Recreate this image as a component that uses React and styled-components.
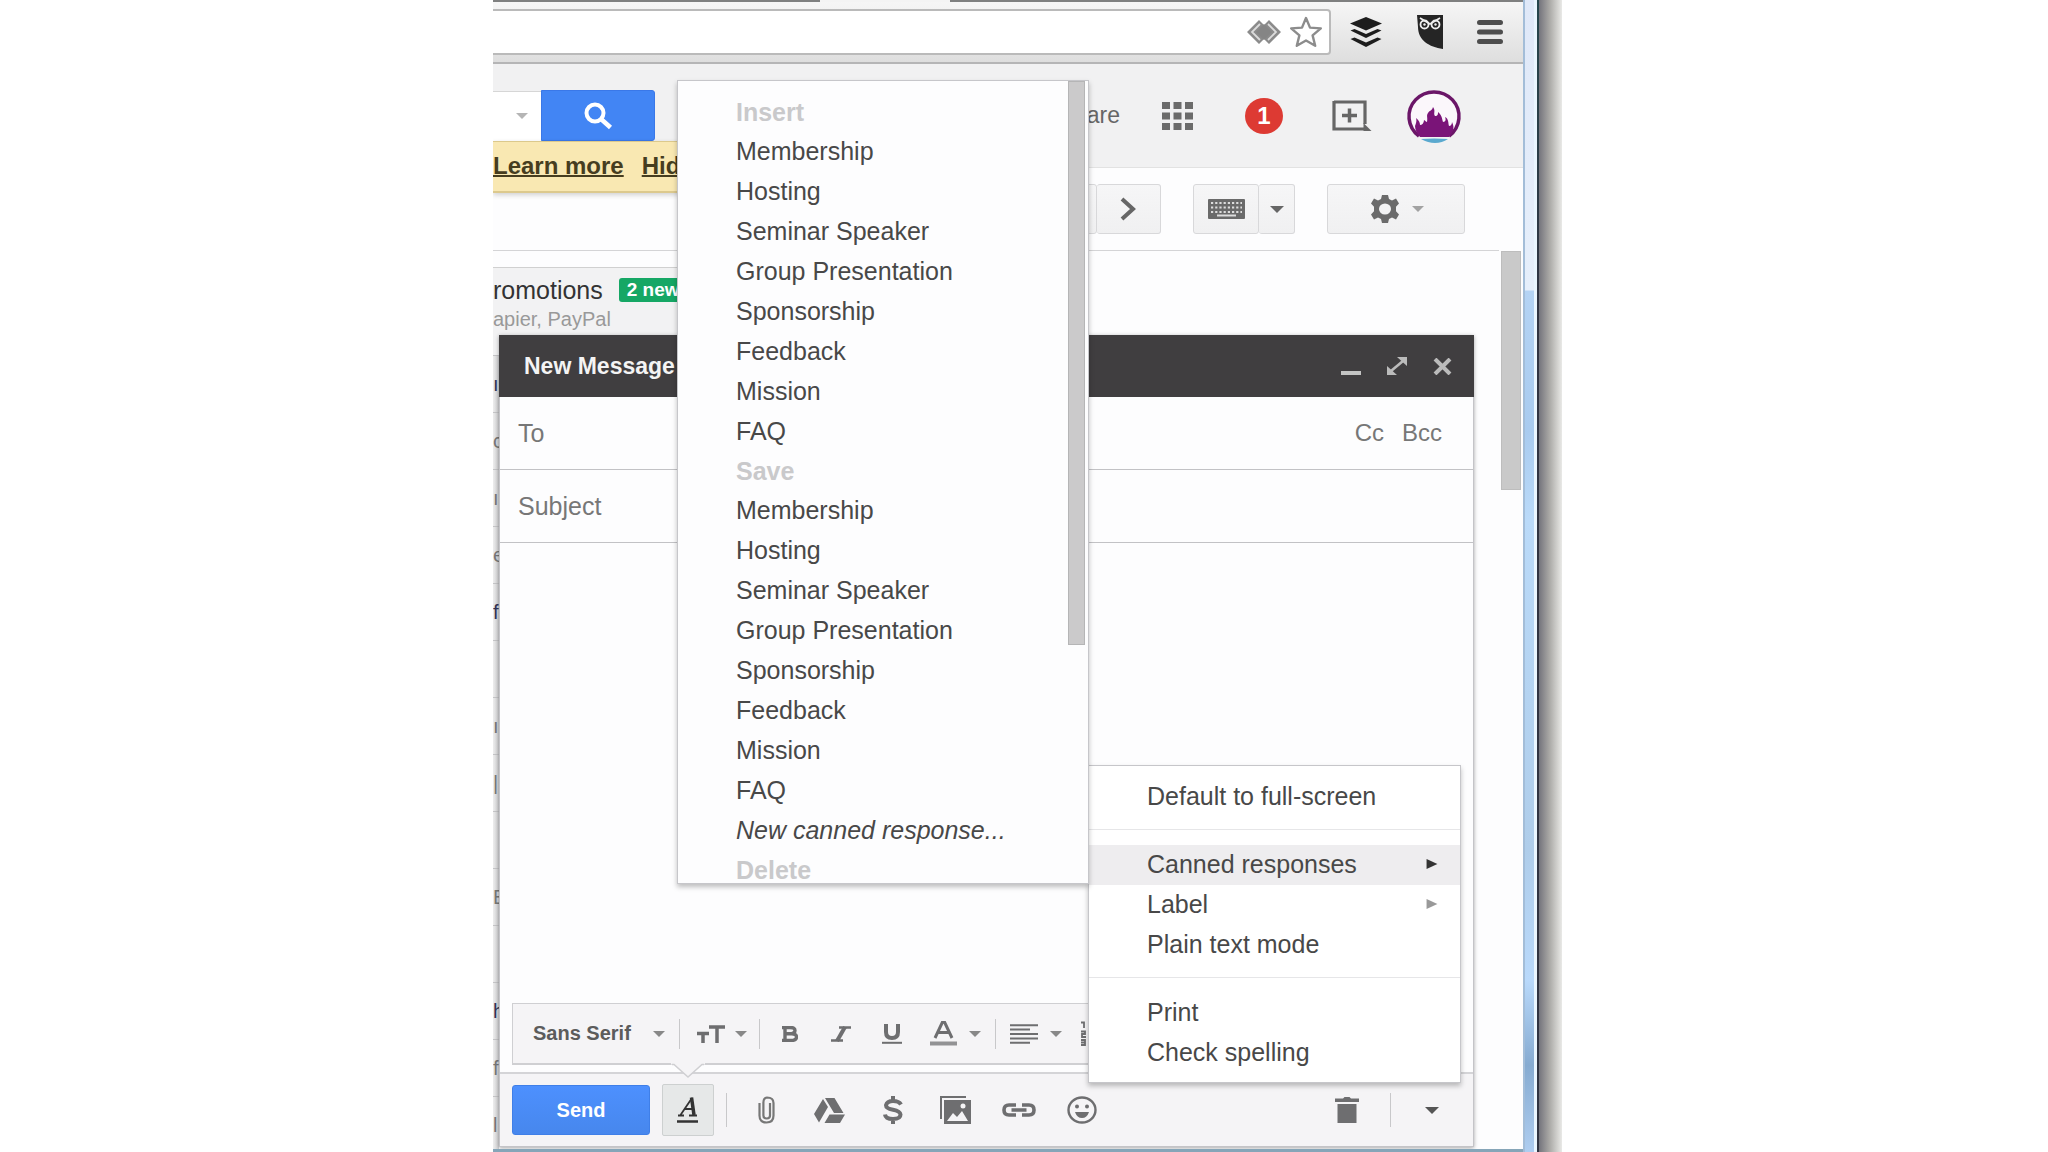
import React from "react";
import styled, { createGlobalStyle, css } from "styled-components";

const Global = createGlobalStyle`
  * { box-sizing: border-box; }
  body { margin: 0; background: #fff; font-family: "Liberation Sans", Arial, sans-serif; color: #444; }
  button, input, textarea { font: inherit; color: inherit; margin: 0; padding: 0; border: 0; background: none; outline: 0; }
  button { cursor: pointer; }
  ul { list-style: none; margin: 0; padding: 0; }
  svg { display: block; flex: none; }
`;

const Page = styled.div`
  display: grid;
  grid-template-columns: minmax(0, 493fr) minmax(0, 1069fr) minmax(0, 486fr);
  height: 100vh;
  overflow: hidden;
`;
const Stage = styled.div`
  grid-column: 2;
  display: flex;
  min-height: 0;
`;
const Screen = styled.div`
  position: relative;
  flex: 1;
  min-width: 0;
  display: flex;
  flex-direction: column;
  overflow: hidden;
  background: #fdfdfe;
  border-bottom: 3px solid #86a5b8;
`;
const Frame = styled.div`
  width: 14px;
  border-left: 2px solid #a3bdd8;
  border-right: 3px solid #eaf6ff;
  background: linear-gradient(#dfe8f8 0, #e6effb 290px, #b4d3f4 291px, #a9cbef 430px, #badaf9 520px, #afcdea 850px, #b9d9fb 980px, #86abd1 1065px, #aecdf0 1152px);
`;
const Edge = styled.div`
  width: 2px;
  background: linear-gradient(#25454c, #303442 300px);
`;
const Shade = styled.div`
  width: 23px;
  background: linear-gradient(90deg, #74747c, #a9a8a5 45%, #dededb 90%, #e9e9e7);
`;

/* browser chrome */
const TabStrip = styled.div`
  display: flex;
  height: 2px;
  background: #7f8080;
`;
const ActiveTab = styled.div`
  width: 130px;
  margin-left: 327px;
  background: #f4f4f4;
`;
const ChromeBar = styled.div`
  display: flex;
  align-items: center;
  height: 62px;
  padding-right: 20px;
  border-bottom: 2px solid #b5b5b6;
  background: linear-gradient(#f6f6f6, #dedede);
`;
const Address = styled.div`
  flex: 1;
  display: flex;
  align-items: center;
  gap: 7px;
  height: 46px;
  padding-right: 6px;
  border: 2px solid #bababa;
  border-left: 0;
  border-radius: 0 4px 4px 0;
  background: #fff;
`;
const AddressInput = styled.input`
  flex: 1;
  min-width: 0;
  font-size: 24px;
`;
const Extensions = styled.div`
  display: flex;
  align-items: center;
  gap: 34px;
  padding-left: 18px;
`;
const IconButton = styled.button`
  display: flex;
  align-items: center;
  justify-content: center;
`;

/* mail header */
const Header = styled.header`
  display: flex;
  align-items: center;
  height: 104px;
  padding-right: 61px;
  border-bottom: 1px solid #e2e2e2;
  background: #f1f1f2;
`;
const SearchOptions = styled.button`
  display: flex;
  align-items: center;
  justify-content: flex-end;
  width: 48px;
  height: 50px;
  padding-right: 13px;
  border-top: 1px solid #d6d6d6;
  background: #fff;
`;
const SearchButton = styled.button`
  display: flex;
  align-items: center;
  justify-content: center;
  width: 114px;
  height: 51px;
  border: 1px solid #3a78e8;
  border-radius: 0 3px 3px 0;
  background: #4285f4;
`;
const HeaderTools = styled.div`
  display: flex;
  align-items: center;
  margin-left: auto;
`;
const ShareLabel = styled.span`
  margin-right: 42px;
  font-size: 23px;
  color: #666;
`;
const Count = styled.button`
  width: 38px;
  height: 36px;
  margin: 0 49px 0 52px;
  border-radius: 50%;
  background: #dd3a33;
  color: #fff;
  font-size: 24px;
  font-weight: bold;
  line-height: 36px;
`;
const Avatar = styled(IconButton)`
  margin-left: 34px;
`;
const Notice = styled.div`
  position: absolute;
  top: 141px;
  left: 0;
  display: flex;
  gap: 18px;
  width: 260px;
  height: 52px;
  border-top: 1px solid #dcc98c;
  border-bottom: 2px solid #dcc98e;
  background: #f9e8b2;
  box-shadow: 0 2px 5px rgba(0, 0, 0, 0.18);
  font-size: 24px;
  font-weight: bold;
  line-height: 48px;
`;
const NoticeLink = styled.a`
  color: #463d1f;
  text-decoration: underline;
  text-decoration-thickness: 2px;
`;

/* action bar */
const Actions = styled.div`
  display: flex;
  justify-content: flex-end;
  gap: 32px;
  height: 83px;
  margin-right: 24px;
  padding: 16px 34px 0 0;
  border-bottom: 1px solid #d4d4d6;
`;
const ButtonGroup = styled.div`
  display: flex;
  height: 50px;
`;
const BarButton = styled.button`
  display: flex;
  align-items: center;
  justify-content: center;
  gap: 11px;
  width: ${(p) => p.$w}px;
  border: 1px solid #d8d8da;
  border-radius: 3px;
  background: linear-gradient(#f6f6f7, #f0f0f1);
  & + & { border-left: 0; }
`;

/* inbox behind the compose window */
const Mailbox = styled.div`
  flex: 1;
  display: flex;
  min-height: 0;
`;
const MailColumn = styled.div`
  flex: 1;
  min-width: 0;
  padding-top: 16px;
`;
const CategoryTab = styled.div`
  width: 300px;
  height: 88px;
  padding-top: 8px;
  border-top: 1px solid #d0d0d0;
  background: #f2f2f3;
`;
const CategoryTitle = styled.div`
  display: flex;
  align-items: center;
  gap: 16px;
  height: 28px;
  color: #333;
  font-size: 25px;
`;
const NewBadge = styled.span`
  height: 24px;
  padding: 0 8px;
  border-radius: 3px;
  background: #16a765;
  color: #fff;
  font-size: 19px;
  font-weight: bold;
  line-height: 23px;
`;
const CategoryNote = styled.div`
  color: #999;
  font-size: 20px;
  line-height: 30px;
`;
const MailRow = styled.div`
  width: 6px;
  height: 57px;
  overflow: hidden;
  border-top: 1px solid #c4c4c6;
  background: linear-gradient(90deg, #ededed, #cfcfd1);
  color: ${(p) => (p.$unread ? "#335" : "#777")};
  font-size: 20px;
  line-height: 56px;
`;
const ScrollThumb = styled.div`
  width: 20px;
  height: 239px;
  margin-right: 2px;
  border: 1px solid #bdbdbd;
  background: #c9c9c9;
`;

/* compose window */
const Compose = styled.section`
  position: absolute;
  top: 335px;
  right: 49px;
  bottom: 2px;
  left: 6px;
  display: flex;
  flex-direction: column;
  border: 1px solid #c4c4c8;
  border-top: 0;
  background: #fdfdfe;
  box-shadow: 0 1px 4px rgba(0, 0, 0, 0.35);
`;
const ComposeHeader = styled.header`
  display: flex;
  align-items: center;
  gap: 26px;
  height: 62px;
  margin: 0 -1px;
  padding: 0 22px 0 25px;
  background: #403e40;
`;
const ComposeTitle = styled.h1`
  flex: 1;
  margin: 0;
  color: #f4f4f4;
  font-size: 23px;
  font-weight: bold;
`;
const Field = styled.label`
  display: flex;
  align-items: center;
  gap: 18px;
  height: 73px;
  padding: 0 31px 0 18px;
  border-bottom: 1px solid #c2c2c5;
  color: #777;
  font-size: 24px;
`;
const FieldInput = styled.input`
  flex: 1;
  min-width: 0;
  font-size: 25px;
  &::placeholder { color: #777; opacity: 1; }
`;
const MessageBody = styled.textarea`
  flex: 1;
  width: 100%;
  resize: none;
`;
const FormatBar = styled.div`
  position: relative;
  display: flex;
  align-items: center;
  height: 62px;
  margin: 0 12px 7px;
  border: 1px solid #cfcfd2;
  border-bottom-width: 2px;
  background: #f5f4f6;
`;
const Pointer = styled.svg`
  position: absolute;
  top: 57px;
  left: 158px;
`;
const FormatCell = styled.button`
  display: flex;
  align-items: center;
  justify-content: ${(p) => (p.$spread ? "space-between" : "center")};
  flex: none;
  width: ${(p) => p.$w}px;
  height: 44px;
  padding: ${(p) => p.$pad || "0"};
  color: #5c5c5c;
  font-size: 20px;
  font-weight: bold;
`;
const Divider = styled.span`
  flex: none;
  width: 1px;
  height: ${(p) => p.$h || 30}px;
  background: #c8c8ca;
`;
const Spacer = styled.span`
  width: 4px;
`;
const SendBar = styled.footer`
  display: flex;
  align-items: center;
  height: 74px;
  padding: 0 34px 0 12px;
  border-top: 2px solid #d4d4d7;
  background: #f5f4f6;
`;
const SendButton = styled.button`
  width: 138px;
  height: 50px;
  border: 1px solid #3f7fe8;
  border-radius: 3px;
  background: linear-gradient(#4d90fe, #4787ed);
  color: #fff;
  font-size: 20px;
  font-weight: bold;
`;
const StyleToggle = styled.button`
  width: 52px;
  height: 52px;
  margin: 0 12px;
  border: 1px solid #cdd0d0;
  border-radius: 2px;
  background: #e6e8e8;
  display: flex;
  align-items: center;
  justify-content: center;
`;
const Tools = styled.div`
  display: flex;
  flex: 1;
  padding-left: 8px;
`;
const ToolButton = styled(IconButton)`
  width: 63px;
  height: 50px;
`;
const Trash = styled(IconButton)`
  margin-right: 31px;
`;
const More = styled(IconButton)`
  margin-left: 34px;
`;

/* menus */
const panel = css`
  position: absolute;
  border: 1px solid #c6c6ca;
  background: #fff;
  box-shadow: 0 3px 5px rgba(0, 0, 0, 0.25);
`;
const OptionsMenu = styled.div`
  ${panel}
  right: 12px;
  bottom: 63px;
  width: 373px;
  padding: 11px 0 9px;
`;
const CannedMenu = styled.div`
  ${panel}
  right: 371px;
  bottom: 198px;
  display: flex;
  justify-content: space-between;
  width: 412px;
  height: 804px;
  padding-right: 3px;
  background: #fdfdfe;
`;
const CannedList = styled.ul`
  flex: 1;
  height: 802px;
  padding-top: 12px;
  overflow: hidden;
`;
const CannedThumb = styled.div`
  width: 17px;
  height: 564px;
  border: 1px solid #b5b5b6;
  background: #cbcacb;
`;
const MenuItem = styled.button`
  display: flex;
  align-items: center;
  justify-content: space-between;
  width: 100%;
  height: 40px;
  padding: 0 22px 2px 58px;
  background: ${(p) => (p.$active ? "#eeedef" : "transparent")};
  color: #484848;
  font-size: 25px;
  font-style: ${(p) => (p.$italic ? "italic" : "normal")};
  text-align: left;
  white-space: nowrap;
`;
const MenuHeading = styled.li`
  height: 39px;
  padding-left: 58px;
  color: #c9c9cb;
  font-size: 25px;
  font-weight: bold;
  line-height: 38px;
`;
const MenuRule = styled.div`
  height: 1px;
  margin: 12px 0 15px;
  background: #e6e6e8;
`;

const Caret = ({ color = "#777", w = 12 }) => (
  <svg width={w} height={w / 2} viewBox="0 0 12 6"><path d="M0 0h12L6 6z" fill={color} /></svg>
);
const Arrow = ({ color }) => (
  <svg width="12" height="10" viewBox="0 0 13 12"><path d="M0 0l13 6-13 6z" fill={color} /></svg>
);

const RESPONSES = ["Membership", "Hosting", "Seminar Speaker", "Group Presentation", "Sponsorship", "Feedback", "Mission", "FAQ"];
const ROWS = [["ı", 1], ["c"], ["ı"], ["e"], ["f", 1], [""], ["ı"], ["|"], [""], ["E"], [""], ["h", 1], ["f"], ["l"]];
const G = "#6e6e70";

function Chrome() {
  return (
    <>
      <TabStrip><ActiveTab /></TabStrip>
      <ChromeBar>
        <Address>
          <AddressInput aria-label="Address" />
          <IconButton aria-label="Page action">
            <svg width="36" height="26" viewBox="0 0 36 26">
              <path d="M13 1L1 13l12 12 5-5 5 5 12-12L23 1l-5 5z" fill="#8b8b8b" />
              <path d="M14 5l-8 8 8 8M22 5l8 8-8 8" fill="none" stroke="#dcdcdc" strokeWidth="1.800" />
              <path d="M18 5l8 8-8 8-8-8z" fill="#858585" />
            </svg>
          </IconButton>
          <IconButton aria-label="Bookmark">
            <svg width="34" height="32" viewBox="0 0 34 32">
              <path d="M17 2l4 9.600 10.800.8-8.200 7 2.600 10.400L17 24.500l-9.200 5.300 2.600-10.400-8.200-7 10.800-.8z" fill="#fff" stroke="#8c8c8c" strokeWidth="2.400" strokeLinejoin="round" />
            </svg>
          </IconButton>
        </Address>
        <Extensions>
          <IconButton aria-label="Buffer">
            <svg width="34" height="30" viewBox="0 0 34 30">
              <path d="M17 0l16 6.500-16 7-16-7z" fill="#1d1d1d" />
              <path d="M1.500 13.500l4-1.500L17 17l11.500-5 4 1.500L17 21zM1.500 22l4-1.500L17 25.500l11.500-5 4 1.500L17 30z" fill="#1d1d1d" />
            </svg>
          </IconButton>
          <IconButton aria-label="Hootsuite">
            <svg width="26" height="34" viewBox="0 0 26 34">
              <path d="M0 0h26v34C12 32 1 25 1 12z" fill="#252525" />
              <g fill="none" stroke="#eee" strokeWidth="1.800"><circle cx="7.500" cy="9.500" r="4" /><circle cx="18.500" cy="9.500" r="4" /><path d="M3 3l10 6 10-6" /></g>
              <circle cx="7.500" cy="9.500" r="1.200" fill="#eee" /><circle cx="18.500" cy="9.500" r="1.200" fill="#eee" />
            </svg>
          </IconButton>
          <IconButton aria-label="Browser menu">
            <svg width="26" height="24" viewBox="0 0 26 24"><path d="M2.500 2.500h21M2.500 12h21M2.500 21.500h21" stroke="#4d4d4d" strokeWidth="5" strokeLinecap="round" /></svg>
          </IconButton>
        </Extensions>
      </ChromeBar>
    </>
  );
}

function MailHeader() {
  return (
    <Header>
      <SearchOptions aria-label="Search options"><Caret color="#b5b5b5" /></SearchOptions>
      <SearchButton aria-label="Search">
        <svg width="30" height="28" viewBox="0 0 30 28">
          <circle cx="12" cy="11" r="8.500" fill="none" stroke="#fff" strokeWidth="4" />
          <path d="M18 17l9.500 8.500" stroke="#fff" strokeWidth="4.500" />
        </svg>
      </SearchButton>
      <HeaderTools>
        <ShareLabel>are</ShareLabel>
        <IconButton aria-label="Apps">
          <svg width="31" height="28" viewBox="0 0 31 28" fill="#6b6b6b">
            {[0, 10.5, 21].map((y) => [0, 11.5, 23].map((x) => <rect key={`${x}-${y}`} x={x} y={y} width="8" height="7" />))}
          </svg>
        </IconButton>
        <Count>1</Count>
        <IconButton aria-label="Add">
          <svg width="40" height="32" viewBox="0 0 40 32">
            <path d="M2 2h31v22M2 1v28h31" fill="none" stroke="#666" strokeWidth="3.200" />
            <path d="M31.500 23l8 8h-8z" fill="#666" />
            <path d="M17.500 8.500v14M10 15.500h15" stroke="#666" strokeWidth="3.500" />
          </svg>
        </IconButton>
        <Avatar aria-label="Account">
          <svg width="56" height="54" viewBox="0 0 56 54">
            <path d="M13 47A25 24.500 0 1 1 43 47" fill="#fbf7fb" stroke="#6b1668" strokeWidth="3.500" />
            <path d="M9 37c1-3 2-5 1-8 3 2 4 5 4 7 2 0 4-2 4-5 2 1 2 2 3 2 1-5-1-6 1-9 2-3 4-2 5-6 3 4 0 6 2 9 3 0 3-2 3-4 4 3 4 7 5 10 3 0 3-3 2-5 4 2 3 6 4 9 2 0 3-2 3-4 3 6 1 10-3 15H14c-3-4-5-7-5-11z" fill="#7a1478" />
            <path d="M15 50q13-1 27 0-6 4-13 4t-14-4z" fill="#5aa9cf" />
          </svg>
        </Avatar>
      </HeaderTools>
    </Header>
  );
}

function ActionBar() {
  return (
    <Actions>
      <ButtonGroup>
        <BarButton $w={68} aria-label="Newer" />
        <BarButton $w={64} aria-label="Older">
          <svg width="17" height="24" viewBox="0 0 17 24"><path d="M2 2l11 10L2 22" fill="none" stroke="#666" strokeWidth="4" /></svg>
        </BarButton>
      </ButtonGroup>
      <ButtonGroup>
        <BarButton $w={66} aria-label="Input tools">
          <svg width="37" height="20" viewBox="0 0 37 20">
            <rect width="37" height="20" rx="1" fill="#6a6a6a" />
            <path d="M3 4h31M3 8.500h31M3 13h31" stroke="#ddd" strokeWidth="2" strokeDasharray="2.200 2" />
            <path d="M9 16.500h19" stroke="#ddd" strokeWidth="2" />
          </svg>
        </BarButton>
        <BarButton $w={36} aria-label="Choose input tool"><Caret color="#666" w={14} /></BarButton>
      </ButtonGroup>
      <ButtonGroup>
        <BarButton $w={138} aria-label="Settings">
          <svg width="32" height="30" viewBox="0 0 32 30">
            <path d="M13 1h6l1 4 3 1.500 4-2 3 5-3 3.200v4.600l3 3.200-3 5-4-2-3 1.500-1 4h-6l-1-4-3-1.500-4 2-3-5 3-3.200v-4.600l-3-3.200 3-5 4 2L12 5z" fill="#6b6b6b" />
            <ellipse cx="16" cy="15" rx="6" ry="5.500" fill="#f3f3f4" />
          </svg>
          <Caret color="#a2a2a2" />
        </BarButton>
      </ButtonGroup>
    </Actions>
  );
}

function FormatTools() {
  return (
    <FormatBar>
      <FormatCell $w={166} $spread $pad="0 14px 0 20px">Sans Serif<Caret color="#888" /></FormatCell>
      <Divider />
      <FormatCell $w={79} $spread $pad="0 12px 0 17px" aria-label="Size">
        <svg width="28" height="18" viewBox="0 0 28 18"><path d="M12 2h16M20 2v16M0 8.500h12M6 8.500V18" stroke={G} strokeWidth="3.500" /></svg>
        <Caret color="#888" />
      </FormatCell>
      <Divider />
      <Spacer />
      <FormatCell $w={51} aria-label="Bold">
        <svg width="17" height="16" viewBox="0 0 17 16"><path d="M1 1.500h8q5 0 5 3T9 7.800H4M4 1v13.500M1 14.500h9q5.500 0 5.500-3.500T10 7.800" fill="none" stroke={G} strokeWidth="3.400" /></svg>
      </FormatCell>
      <FormatCell $w={51} aria-label="Italic">
        <svg width="20" height="16" viewBox="0 0 20 16"><path d="M8 1.500h12M0 14.500h12" stroke={G} strokeWidth="2.500" /><path d="M14 1L6 15" stroke={G} strokeWidth="4" /></svg>
      </FormatCell>
      <FormatCell $w={51} aria-label="Underline">
        <svg width="20" height="20" viewBox="0 0 20 20"><path d="M4 0v8q0 6 6 6t6-6V0" fill="none" stroke={G} strokeWidth="4" /><path d="M0 18.800h20" stroke={G} strokeWidth="2" /></svg>
      </FormatCell>
      <FormatCell $w={78} $spread $pad="0 14px 0 13px" aria-label="Text color">
        <svg width="27" height="25" viewBox="0 0 27 25"><path d="M5 17L12.500 1h2L22 17M8 11.500h11" fill="none" stroke={G} strokeWidth="3" /><path d="M0 22.500h27" stroke="#929294" strokeWidth="4" /></svg>
        <Caret color="#888" />
      </FormatCell>
      <Divider />
      <FormatCell $w={72} $spread $pad="0 6px 0 14px" aria-label="Align">
        <svg width="28" height="20" viewBox="0 0 28 20"><path d="M0 1.200h28M0 5.600h20M0 10h28M0 14.400h28M0 18.800h20" stroke={G} strokeWidth="2" /></svg>
        <Caret color="#888" />
      </FormatCell>
      <FormatCell $w={46} aria-label="Numbered list">
        <svg width="20" height="26" viewBox="0 0 20 26"><path d="M0 1.500h3V7M0 10.500h4v2.500H1v3h4M0 19h4v5H0M0 21.500h4" fill="none" stroke={G} strokeWidth="1.800" /><path d="M9 4h11M9 13h11M9 22h11" stroke={G} strokeWidth="2" /></svg>
      </FormatCell>
      <Pointer width="34" height="18" viewBox="0 0 34 18"><path d="M0 3.500h3L17 16 31 3.500h3V0H0z" fill="#f5f4f6" /><path d="M1 3.500h2L17 16 31 3.500h2" fill="none" stroke="#cfcfd2" strokeWidth="1.500" /></Pointer>
    </FormatBar>
  );
}

function SendTools() {
  return (
    <SendBar>
      <SendButton>Send</SendButton>
      <StyleToggle aria-label="Formatting options">
        <svg width="22" height="28" viewBox="0 0 22 28"><path d="M1 19.500h6M12 19.500h8M3.500 19L15 2M8 13h8" stroke="#333" strokeWidth="1.800" fill="none" /><path d="M14.500 1.500L17 19" stroke="#333" strokeWidth="3.500" /><path d="M0 25.500h21" stroke="#333" strokeWidth="2.500" /></svg>
      </StyleToggle>
      <Divider $h={34} />
      <Tools>
        <ToolButton aria-label="Attach files">
          <svg width="17" height="28" viewBox="0 0 17 28"><path d="M12 7v12.500q0 3-3.300 3t-3.300-3V6.500Q5.400 2 9 1.500 15.500 1.500 15.500 7v12.500q0 7-7 7t-7-7V7" fill="none" stroke="#777" strokeWidth="2.200" /></svg>
        </ToolButton>
        <ToolButton aria-label="Insert from Drive">
          <svg width="31" height="25" viewBox="0 0 31 25" fill={G}><path d="M9 1l5 8-9 15.500L0 16zM11 0h9.500l9 15H20zM15.500 16.500H31L26 25H10.500z" /></svg>
        </ToolButton>
        <ToolButton aria-label="Send money">
          <svg width="20" height="28" viewBox="0 0 20 28"><path d="M18 8.500Q16 5 10 5T3 9.200Q3 12.500 10 13.800t7.500 4.700Q17.500 23 10 23T2 18.500M10 0v5M10 23v5" fill="none" stroke={G} strokeWidth="4" /></svg>
        </ToolButton>
        <ToolButton aria-label="Insert photo">
          <svg width="31" height="28" viewBox="0 0 31 28"><path d="M1 23V1h25" fill="none" stroke={G} strokeWidth="2" /><path d="M4 4h27v24H4z" fill={G} /><path d="M7 25l6-8 4 4 5-6 6 10z" fill="#f5f4f6" /><circle cx="23" cy="10" r="2.500" fill="#f5f4f6" /></svg>
        </ToolButton>
        <ToolButton aria-label="Insert link">
          <svg width="34" height="14" viewBox="0 0 34 14"><path d="M14 2H7Q2 2 2 7t5 5h7M20 2h7q5 0 5 5t-5 5h-7M9.500 7h15" fill="none" stroke={G} strokeWidth="3.600" /></svg>
        </ToolButton>
        <ToolButton aria-label="Insert emoji">
          <svg width="30" height="28" viewBox="0 0 30 28"><ellipse cx="15" cy="14" rx="13.500" ry="12.500" fill="none" stroke={G} strokeWidth="2.400" /><circle cx="10" cy="10.500" r="2" fill={G} /><circle cx="20" cy="10.500" r="2" fill={G} /><path d="M8 16h14q-2 6-7 6t-7-6z" fill={G} /></svg>
        </ToolButton>
      </Tools>
      <Trash aria-label="Discard draft">
        <svg width="24" height="26" viewBox="0 0 24 26" fill={G}><path d="M0 1.500h8L9.500 0h5L16 1.500h8V5H0zM2.500 7h19v19h-19z" /></svg>
      </Trash>
      <Divider $h={34} />
      <More aria-label="More options"><Caret color="#555" w={14} /></More>
    </SendBar>
  );
}

function Menus() {
  const items = (group) => RESPONSES.map((r) => <li key={group + r}><MenuItem>{r}</MenuItem></li>);
  return (
    <OptionsMenu>
      <MenuItem>Default to full-screen</MenuItem>
      <MenuRule />
      <MenuItem $active>Canned responses<Arrow color="#333" /></MenuItem>
      <MenuItem>Label<Arrow color="#999" /></MenuItem>
      <MenuItem>Plain text mode</MenuItem>
      <MenuRule />
      <MenuItem>Print</MenuItem>
      <MenuItem>Check spelling</MenuItem>
      <CannedMenu>
        <CannedList>
          <MenuHeading>Insert</MenuHeading>
          {items("insert")}
          <MenuHeading>Save</MenuHeading>
          {items("save")}
          <li><MenuItem $italic>New canned response...</MenuItem></li>
          <MenuHeading>Delete</MenuHeading>
        </CannedList>
        <CannedThumb />
      </CannedMenu>
    </OptionsMenu>
  );
}

export default function App() {
  return (
    <Page>
      <Global />
      <Stage>
        <Screen>
          <Chrome />
          <MailHeader />
          <ActionBar />
          <Notice>
            <NoticeLink href="#more">Learn more</NoticeLink>
            <NoticeLink href="#hide">Hide</NoticeLink>
          </Notice>
          <Mailbox>
            <MailColumn>
              <CategoryTab>
                <CategoryTitle>romotions<NewBadge>2 new</NewBadge></CategoryTitle>
                <CategoryNote>apier, PayPal</CategoryNote>
              </CategoryTab>
              {ROWS.map(([text, unread], i) => <MailRow key={i} $unread={unread}>{text}</MailRow>)}
            </MailColumn>
            <ScrollThumb />
          </Mailbox>
          <Compose>
            <ComposeHeader>
              <ComposeTitle>New Message</ComposeTitle>
              <IconButton aria-label="Minimize">
                <svg width="20" height="20" viewBox="0 0 20 20"><path d="M0 17h20" stroke="#c4c4c4" strokeWidth="4" /></svg>
              </IconButton>
              <IconButton aria-label="Full screen">
                <svg width="20" height="18" viewBox="0 0 20 18"><path d="M4 14L16 4" stroke="#bbb" strokeWidth="2.600" /><path d="M10 0h10v9zM0 9v9h10z" fill="#bbb" /></svg>
              </IconButton>
              <IconButton aria-label="Close">
                <svg width="19" height="17" viewBox="0 0 19 17"><path d="M2 1l15 15M17 1L2 16" stroke="#bbb" strokeWidth="4" /></svg>
              </IconButton>
            </ComposeHeader>
            <Field>
              <FieldInput placeholder="To" aria-label="To" />
              <button type="button">Cc</button>
              <button type="button">Bcc</button>
            </Field>
            <Field><FieldInput placeholder="Subject" aria-label="Subject" /></Field>
            <MessageBody aria-label="Message body" />
            <FormatTools />
            <SendTools />
            <Menus />
          </Compose>
        </Screen>
        <Frame />
        <Edge />
        <Shade />
      </Stage>
    </Page>
  );
}
